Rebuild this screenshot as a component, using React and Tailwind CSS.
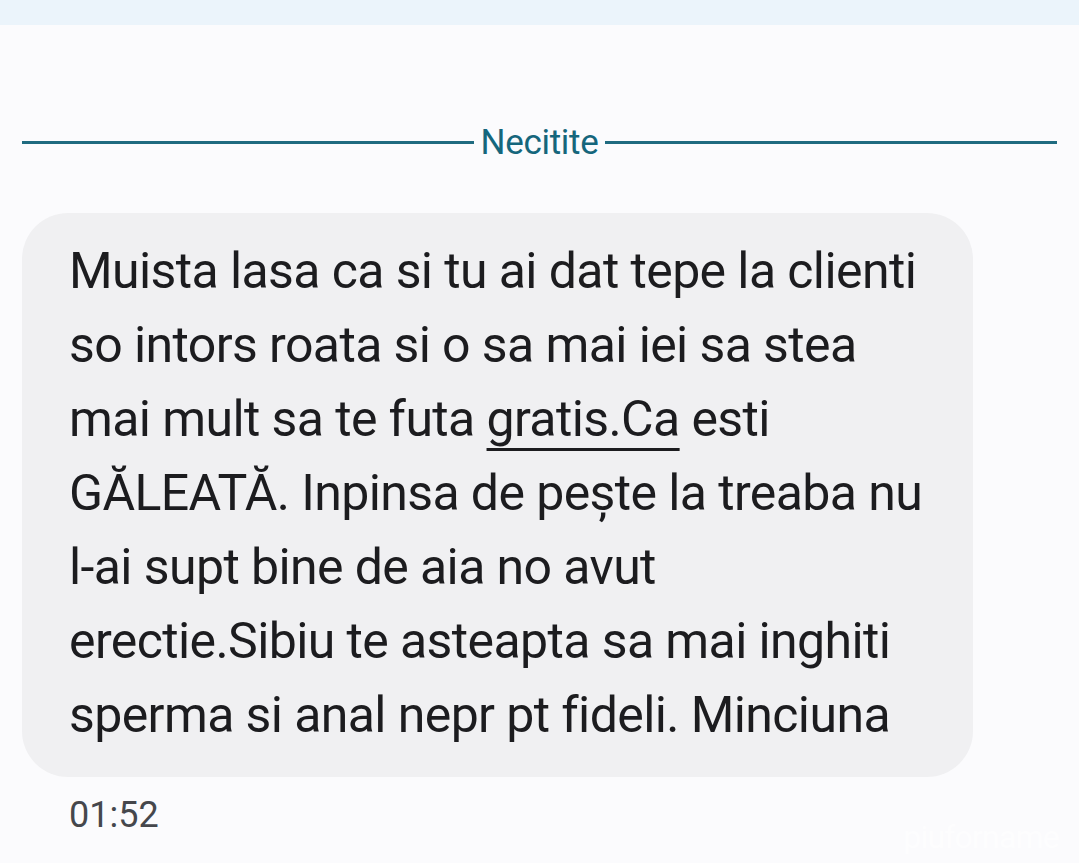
export default function App() {
  const lines = [
    "Muista lasa ca si tu ai dat tepe la clienti",
    "so intors roata si o sa mai iei sa stea",
    null,
    "GĂLEATĂ. Inpinsa de pește la treaba nu",
    "l-ai supt bine de aia no avut",
    "erectie.Sibiu te asteapta sa mai inghiti",
    "sperma si anal nepr pt fideli. Minciuna",
  ]

  return (
    <div className="w-[1079px] h-[863px] overflow-hidden bg-[#fbfbfd] flex flex-col" style={{ fontFamily: "Roboto, 'Noto Sans', sans-serif" }}>
      <div className="h-[25px] bg-[#ebf4fb] shrink-0" />

      <div className="flex items-center px-[22px] mt-[100px] h-[34px]">
        <div className="flex-1 h-[3px] bg-[#1f6b80]" />
        <span className="px-[7px] text-[35px] leading-none text-[#15667c] tracking-[-0.3px]">Necitite</span>
        <div className="flex-1 h-[3px] bg-[#1f6b80]" />
      </div>

      <div className="mx-[22px] mt-[54px] w-[951px] h-[564px] rounded-[46px] bg-[#f0f0f2] pl-[47px] pt-[21px] box-border">
        <div className="text-[50px] leading-[74px] tracking-[-0.6px] text-[#1c1c1f]">
          {lines.map((l, i) =>
            l === null ? (
              <div key={i} className="whitespace-nowrap">
                mai mult sa te futa{" "}
                <span className="underline decoration-[3px] underline-offset-[12px]">gratis.Ca</span> esti
              </div>
            ) : (
              <div key={i} className="whitespace-nowrap">{l}</div>
            )
          )}
        </div>
      </div>

      <div className="pl-[69px] mt-[16px] text-[36px] leading-[44px] text-[#45474c]">01:52</div>

      <div className="relative flex-1">
        <span className="absolute right-[20px] top-[-16px] text-[32px] leading-none text-white/60 tracking-tight">piuforname</span>
      </div>
    </div>
  )
}
